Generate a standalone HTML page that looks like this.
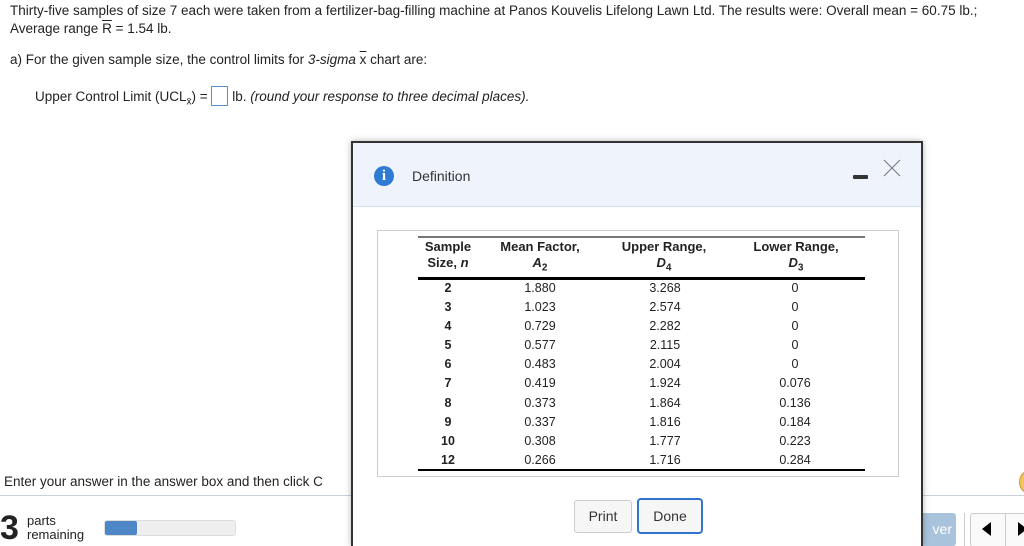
<!DOCTYPE html>
<html><head><meta charset="utf-8"><style>
html,body{margin:0;width:1024px;height:546px;overflow:hidden}
body{background:#fff;font-family:"Liberation Sans",Arial,sans-serif;color:#222;position:relative;font-size:13.5px}
.a{position:absolute;white-space:nowrap}
.t td{padding:0}
</style></head><body>
<div class="a" style="left:10px;top:2px;line-height:18px">Thirty-five samples of size 7 each were taken from a fertilizer-bag-filling machine at Panos Kouvelis Lifelong Lawn Ltd. The results were: Overall mean = 60.75 lb.;<br>Average range <span style="text-decoration:overline">R</span> = 1.54 lb.</div>
<div class="a" style="left:10px;top:52px">a) For the given sample size, the control limits for <i>3-sigma</i> <span style="text-decoration:overline">x</span> chart are:</div>
<div class="a" style="left:35px;top:86px">Upper Control Limit (UCL<sub style="font-size:10px">x̄</sub>) = <span style="display:inline-block;width:15px;height:18px;border:1px solid #5a8fcf;vertical-align:-5px"></span> lb. <i>(round your response to three decimal places).</i></div>
<div class="a" style="left:4px;top:474px">Enter your answer in the answer box and then click C</div>
<div class="a" style="left:0;top:495px;width:1024px;height:1px;background:#c8d2dc"></div>
<div class="a" style="left:0;top:511px;font-size:34px;font-weight:bold;line-height:34px">3</div>
<div class="a" style="left:27px;top:514px;font-size:13px;line-height:14px">parts<br>remaining</div>
<div class="a" style="left:104px;top:520px;width:130px;height:14px;border:1px solid #ddd;border-radius:3px;background:#eee"><div style="width:32px;height:14px;background:#4f86c6;border-radius:2px"></div></div>
<div class="a" style="left:1019px;top:470px;width:20px;height:22px;border-radius:50%;background:#f3c45a;border:1px solid #c9973a"></div>
<div class="a" style="left:918px;top:513px;width:38px;height:33px;background:#a9c3dc;border-radius:3px;color:#fff;font-size:14px;line-height:33px;text-align:right;padding-right:4px;box-sizing:border-box">ver</div>
<div class="a" style="left:964px;top:513px;width:1px;height:33px;background:#ccc"></div>
<div class="a" style="left:970px;top:513px;width:60px;height:32px;border:1px solid #ccc;border-radius:3px;background:#fafafa"></div>
<div class="a" style="left:1005px;top:513px;width:1px;height:33px;background:#ccc"></div>
<div class="a" style="left:982px;top:522px;width:0;height:0;border-top:7px solid transparent;border-bottom:7px solid transparent;border-right:9px solid #000"></div>
<div class="a" style="left:1018px;top:522px;width:0;height:0;border-top:7px solid transparent;border-bottom:7px solid transparent;border-left:9px solid #000"></div>

<div class="a" style="left:351px;top:141px;width:568px;height:403px;border:2px solid #333;border-bottom:none;background:#fff;box-shadow:0 0 6px rgba(0,0,0,.3)">
 <div style="position:absolute;left:0;top:0;width:568px;height:63px;background:#eff4fc;border-bottom:1px solid #cfe0f0"></div>
 <div class="a" style="left:21px;top:23px;width:20px;height:20px;border-radius:50%;background:#2f7bd4;color:#fff;font:bold 15px 'Liberation Serif',serif;text-align:center;line-height:20px">i</div>
 <div class="a" style="left:59px;top:25px;font-size:14px;color:#333">Definition</div>
 <div class="a" style="left:500px;top:32px;width:15px;height:4px;background:#333;border-radius:1px"></div>
 <svg class="a" style="left:529px;top:15px" width="20" height="20"><path d="M2 2L18 18M18 2L2 18" stroke="#777" stroke-width="1"/></svg>
 <div class="a" style="left:24px;top:87px;width:520px;height:245px;border:1px solid #ccc"></div>
 <div class="a" style="left:65px;top:93px;width:447px;height:2px;background:#777"></div>
 <div class="a" style="left:65px;top:134px;width:447px;height:3px;background:#000"></div>
 <div class="a" style="left:65px;top:326px;width:447px;height:2px;background:#000"></div>
 <div class="a" style="left:55px;top:96px;width:80px;text-align:center;font-weight:bold;font-size:13px;line-height:16px">Sample<br>Size, <i>n</i></div>
 <div class="a" style="left:137px;top:96px;width:100px;text-align:center;font-weight:bold;font-size:13px;line-height:16px">Mean Factor,<br><i>A</i><sub style="font-size:10px">2</sub></div>
 <div class="a" style="left:251px;top:96px;width:120px;text-align:center;font-weight:bold;font-size:13px;line-height:16px">Upper Range,<br><i>D</i><sub style="font-size:10px">4</sub></div>
 <div class="a" style="left:383px;top:96px;width:120px;text-align:center;font-weight:bold;font-size:13px;line-height:16px">Lower Range,<br><i>D</i><sub style="font-size:10px">3</sub></div>
 <table class="t a" style="left:55px;top:136px;border-collapse:collapse;font-size:12.5px;line-height:19.1px">
  <tr><td style="width:80px;text-align:center;font-weight:bold">2<br>3<br>4<br>5<br>6<br>7<br>8<br>9<br>10<br>12</td>
  <td style="width:100px;text-align:center;padding-left:2px">1.880<br>1.023<br>0.729<br>0.577<br>0.483<br>0.419<br>0.373<br>0.337<br>0.308<br>0.266</td>
  <td style="width:150px;text-align:center">3.268<br>2.574<br>2.282<br>2.115<br>2.004<br>1.924<br>1.864<br>1.816<br>1.777<br>1.716</td>
  <td style="width:110px;text-align:center">0<br>0<br>0<br>0<br>0<br>0.076<br>0.136<br>0.184<br>0.223<br>0.284</td></tr>
 </table>
 <div class="a" style="left:221px;top:357px;width:56px;height:31px;border:1px solid #ccc;border-radius:3px;background:#f6f6f6;text-align:center;line-height:31px;font-size:14px;color:#333">Print</div>
 <div class="a" style="left:284px;top:355px;width:62px;height:32px;border:2px solid #2f74c8;border-radius:4px;background:#f6f6f6;text-align:center;line-height:32px;font-size:14px;color:#333">Done</div>
</div>
</body></html>
